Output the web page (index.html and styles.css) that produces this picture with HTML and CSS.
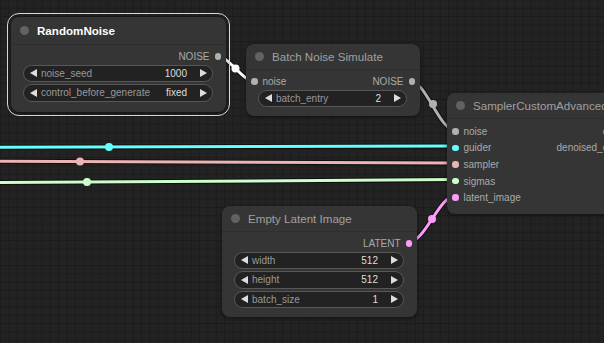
FILE: index.html
```html
<!DOCTYPE html>
<html lang="en">
<head>
  <meta charset="UTF-8" />
  <title>Graph</title>
  <link rel="stylesheet" href="styles.css">
</head>
<body>
  <div class="canvas">
    <!-- links -->
    <svg class="links" width="604" height="343" viewBox="0 0 604 343">
      <g class="shadow">
        <path d="M-10,147.4 L455,146"/>
        <path d="M-10,161.2 L455,163"/>
        <path d="M-10,182.6 L455,179.6"/>
        <path d="M217,56 C229,56 242,81 254,81"/>
        <path d="M410,81 C426,81 439,130 455,130"/>
        <path d="M409,242 C425,242 439,196 455,196"/>
      </g>
      <path stroke="#66ffff" d="M-10,147.4 L455,146"/>
      <path stroke="#ecb4b4" d="M-10,161.2 L455,163"/>
      <path stroke="#cdffcd" d="M-10,182.6 L455,179.6"/>
      <path stroke="#ffffff" d="M217,56 C229,56 242,81 254,81"/>
      <path stroke="#b0b0b0" d="M410,81 C426,81 439,130 455,130"/>
      <path stroke="#ff9cf9" d="M409,242 C425,242 439,196 455,196"/>
      <circle cx="109" cy="147" r="4" fill="#66ffff"/>
      <circle cx="80" cy="161.6" r="4" fill="#ecb4b4"/>
      <circle cx="87" cy="182" r="4" fill="#cdffcd"/>
      <circle cx="235.5" cy="68.5" r="4" fill="#ffffff"/>
      <circle cx="433" cy="104" r="4" fill="#b0b0b0"/>
      <circle cx="432" cy="219" r="4" fill="#ff9cf9"/>
    </svg>

    <!-- RandomNoise -->
    <div class="node node-random selected">
      <div class="title"><span class="title-dot"></span>RandomNoise</div>
      <div class="slots">
        <div class="slot-row">
          <span></span>
          <span class="out">NOISE <i class="dot" style="background:#b0b0b0"></i></span>
        </div>
      </div>
      <div class="widget"><span class="arrow-l"></span><span class="label">noise_seed</span><span class="value">1000</span><span class="arrow-r"></span></div>
      <div class="widget"><span class="arrow-l"></span><span class="label">control_before_generate</span><span class="value">fixed</span><span class="arrow-r"></span></div>
    </div>

    <!-- Batch Noise Simulate -->
    <div class="node node-batch">
      <div class="title"><span class="title-dot"></span>Batch Noise Simulate</div>
      <div class="slots">
        <div class="slot-row">
          <span class="in"><i class="dot" style="background:#b0b0b0"></i> noise</span>
          <span class="out">NOISE <i class="dot" style="background:#b0b0b0"></i></span>
        </div>
      </div>
      <div class="widget"><span class="arrow-l"></span><span class="label">batch_entry</span><span class="value">2</span><span class="arrow-r"></span></div>
    </div>

    <!-- SamplerCustomAdvanced -->
    <div class="node node-sampler">
      <div class="title"><span class="title-dot"></span>SamplerCustomAdvanced</div>
      <div class="slots">
        <div class="slot-row">
          <span class="in"><i class="dot" style="background:#b0b0b0"></i> noise</span>
          <span class="out">output <i class="dot" style="background:#ff9cf9"></i></span>
        </div>
        <div class="slot-row">
          <span class="in"><i class="dot" style="background:#66ffff"></i> guider</span>
          <span class="out">denoised_output <i class="dot" style="background:#ff9cf9"></i></span>
        </div>
        <div class="slot-row">
          <span class="in"><i class="dot" style="background:#ecb4b4"></i> sampler</span>
        </div>
        <div class="slot-row">
          <span class="in"><i class="dot" style="background:#cdffcd"></i> sigmas</span>
        </div>
        <div class="slot-row">
          <span class="in"><i class="dot" style="background:#ff9cf9"></i> latent_image</span>
        </div>
      </div>
    </div>

    <!-- Empty Latent Image -->
    <div class="node node-latent">
      <div class="title"><span class="title-dot"></span>Empty Latent Image</div>
      <div class="slots">
        <div class="slot-row">
          <span></span>
          <span class="out">LATENT <i class="dot" style="background:#ff9cf9"></i></span>
        </div>
      </div>
      <div class="widget"><span class="arrow-l"></span><span class="label">width</span><span class="value">512</span><span class="arrow-r"></span></div>
      <div class="widget"><span class="arrow-l"></span><span class="label">height</span><span class="value">512</span><span class="arrow-r"></span></div>
      <div class="widget"><span class="arrow-l"></span><span class="label">batch_size</span><span class="value">1</span><span class="arrow-r"></span></div>
    </div>
  </div>
</body>
</html>
```

FILE: styles.css
```css
body {
  margin: 0;
  padding: 0;
  background-color: #222;
  font-family: 'Liberation Sans', Arial, sans-serif;
}
.canvas {
  position: relative;
  width: 604px;
  height: 343px;
  overflow: hidden;
  background-color: #232323;
  background-image:
    linear-gradient(#1c1c1c 1px, transparent 1px),
    linear-gradient(90deg, #1c1c1c 1px, transparent 1px);
  background-size: 8.3px 8.3px;
  background-position: 0 -0.5px;
}
.links {
  position: absolute;
  left: 0;
  top: 0;
}
.links path {
  fill: none;
  stroke-width: 3;
}
.links .shadow path {
  stroke: rgba(0,0,0,0.55);
  stroke-width: 5;
}
.node {
  position: absolute;
  background-color: #353535;
  border-radius: 8px;
  box-shadow: 0 1px 4px rgba(0,0,0,0.5);
  padding-bottom: 9px;
}
.node.selected {
  outline: 1.5px solid #d8d8d8;
  outline-offset: 3px;
}
.node-random {
  left: 11px;
  top: 17px;
  width: 215px;
  padding-bottom: 10px;
}
.node-batch {
  left: 246px;
  top: 44px;
  width: 174px;
}
.node-sampler {
  left: 447px;
  top: 93px;
  width: 200px;
  padding-bottom: 8px;
}
.node-latent {
  left: 222px;
  top: 206px;
  width: 195px;
}
.title {
  height: 25px;
  display: flex;
  align-items: center;
  padding-left: 9px;
  font-size: 11.6px;
  color: #a0a0a0;
  border-bottom: 1px solid #2e2e2e;
  white-space: nowrap;
}
.selected .title {
  color: #fff;
  font-weight: bold;
  height: 27px;
}
.title-dot {
  width: 9px;
  height: 9px;
  border-radius: 50%;
  background-color: #626262;
  margin-right: 8px;
}
.slots {
  padding-top: 3px;
}
.node-sampler .slots {
  padding-top: 4px;
}
.slot-row {
  height: 16.6px;
  display: flex;
  align-items: center;
  justify-content: space-between;
  font-size: 10px;
  color: #aaa;
  white-space: nowrap;
}
.in {
  display: flex;
  align-items: center;
  padding-left: 5px;
}
.out {
  display: flex;
  align-items: center;
  padding-right: 5px;
}
.dot {
  display: inline-block;
  width: 6.5px;
  height: 6.5px;
  border-radius: 50%;
}
.in .dot {
  margin-right: 5px;
}
.out .dot {
  margin-left: 5px;
}
.widget {
  height: 15.5px;
  margin: 2px 13px 0 12px;
  border: 1px solid #575757;
  border-radius: 9px;
  background-color: #222;
  display: flex;
  align-items: center;
  font-size: 10px;
  white-space: nowrap;
}
.slots + .widget {
  margin-top: 0;
}
.widget .label {
  color: #999;
  flex: 1;
  margin-left: 4px;
}
.widget .value {
  color: #ddd;
  margin-right: 13px;
}
.arrow-l {
  width: 0;
  height: 0;
  border-top: 4px solid transparent;
  border-bottom: 4px solid transparent;
  border-right: 7px solid #ddd;
  margin-left: 6px;
}
.arrow-r {
  width: 0;
  height: 0;
  border-top: 4px solid transparent;
  border-bottom: 4px solid transparent;
  border-left: 7px solid #ddd;
  margin-right: 5px;
}
```
